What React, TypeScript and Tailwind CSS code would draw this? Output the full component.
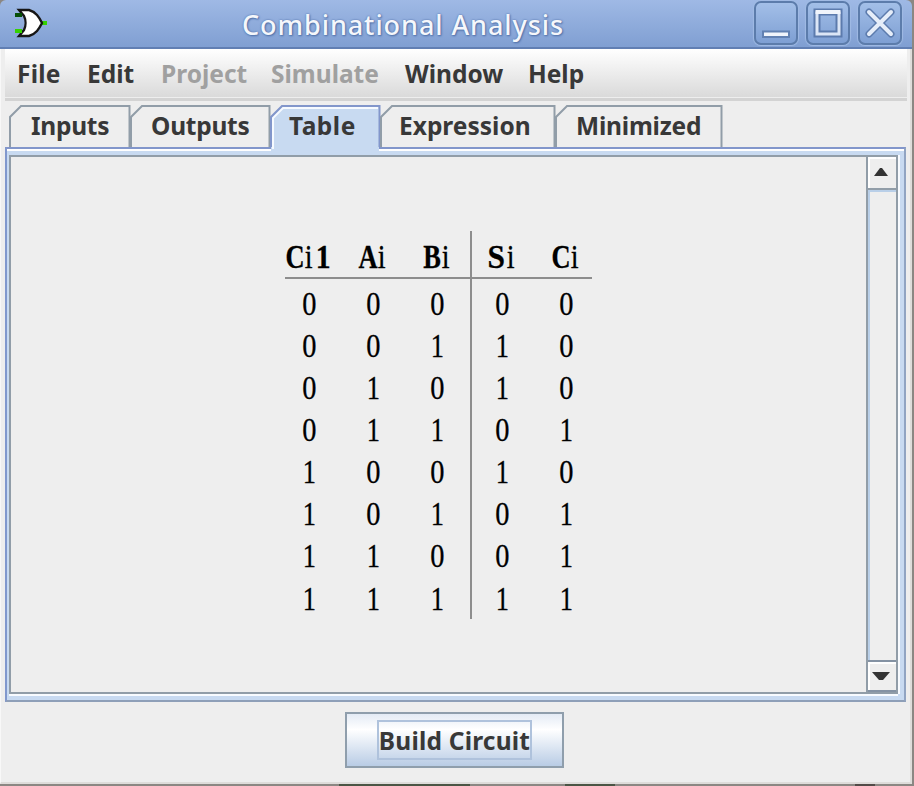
import type { ReactNode } from "react";

const inputs = [
  ["0", "0", "0"],
  ["0", "0", "1"],
  ["0", "1", "0"],
  ["0", "1", "1"],
  ["1", "0", "0"],
  ["1", "0", "1"],
  ["1", "1", "0"],
  ["1", "1", "1"],
];

const outputs = [
  ["0", "0"],
  ["1", "0"],
  ["1", "0"],
  ["0", "1"],
  ["1", "0"],
  ["0", "1"],
  ["0", "1"],
  ["1", "1"],
];

function GateIcon() {
  return (
    <svg className="block h-[30px] w-[34px]" viewBox="0 0 34 30">
      <path d="M27 15H33" stroke="#35d000" strokeWidth="4" />
      <path
        d="M5 2H15C22 4 25 9 28 15C25 21 22 26 15 28H5L10 22C12 18 12 12 10 8Z"
        fill="#fff"
        stroke="#161616"
        strokeWidth="2.4"
      />
      <path d="M1 7H8" stroke="#064f08" strokeWidth="4" />
      <path d="M1 23H8" stroke="#35d000" strokeWidth="4" />
    </svg>
  );
}

function WindowButton({ label, children }: { label: string; children: ReactNode }) {
  return (
    <button
      aria-label={label}
      className="flex h-[44px] w-[44px] items-center justify-center rounded-[7px] border-2 border-[#5c7cab] bg-gradient-to-b from-[#a3bfe8] to-[#7e9fd3] shadow-[0_0_1px_1px_#a0bbe4]"
    >
      <svg className="block h-10 w-10 shrink-0" viewBox="0 0 40 40">
        {children}
      </svg>
    </button>
  );
}

function Tab({ label, width, selected, text }: { label: string; width: number; selected?: boolean; text: string }) {
  const edge = selected ? "#8296cb" : "#919da8";
  const w = width;
  return (
    <button className="relative h-[42px] shrink-0 text-left" style={{ width: w }}>
      <svg className="absolute left-0 top-0 block h-[47px] overflow-visible" width={w} height="47">
        <path
          d={`M1 ${selected ? 47 : 42}V12L12 1H${w - 1}V${selected ? 47 : 42}Z`}
          fill={selected ? "#c8daf1" : "#eeeeee"}
        />
        {selected && <path d={`M3 44V13L13 3H${w - 2}`} fill="none" stroke="#f6faff" strokeWidth="2" />}
        <path d={`M1 42V12L12 1H${w - 0.5}V42`} fill="none" stroke={edge} strokeWidth="2" />
      </svg>
      <span className={`relative block whitespace-nowrap leading-[42px] ${text}`}>{label}</span>
    </button>
  );
}

function Digit({ value }: { value: string }) {
  return (
    <span className="flex w-16 justify-center">
      <span className={value === "0" ? "block scale-x-[0.86]" : "block scale-x-[0.8]"}>{value}</span>
    </span>
  );
}

function Heading({ first, last = "" }: { first: string; last?: string }) {
  return (
    <span className="flex w-16 items-baseline justify-center">
      <b className="flex w-[19px] justify-center">
        <span className={first === "S" ? "block scale-x-[0.95]" : "block scale-x-[0.8]"}>{first}</span>
      </b>
      <span className="flex w-[9px] justify-center">
        <span className="block scale-x-[0.85]">i</span>
      </span>
      {last && (
        <b className="ml-[2px] flex w-[15px] justify-center">
          <span className="block scale-x-[0.9]">{last}</span>
        </b>
      )}
    </span>
  );
}

function Rows({ rows }: { rows: string[][] }) {
  return (
    <div className="-ml-px pt-[4px]">
      {rows.map((row, i) => (
        <div key={i} className="flex h-[42.15px] items-center">
          {row.map((value, j) => (
            <Digit key={j} value={value} />
          ))}
        </div>
      ))}
    </div>
  );
}

export default function App() {
  return (
    <div className="flex h-[786px] w-[914px] flex-col overflow-hidden bg-[#8b8783] font-['Noto_Sans',sans-serif] text-[24.5px] font-bold text-[#383838]">
      <header className="flex h-[49px] w-[912px] shrink-0 rounded-t-[6px] border-b-2 border-[#617fb3] bg-gradient-to-b from-[#9fb9e5] to-[#809fd2]">
        <div className="w-[242px] pl-[14px] pt-[8px]">
          <GateIcon />
        </div>
        <h1 className="w-[512px] whitespace-nowrap pt-[3px] text-[27px] font-medium leading-[44px] tracking-[0.93px] text-[#f5f7fb] [text-shadow:0_0_2px_#4d6da6,1px_1px_2px_#5273ab]">
          Combinational Analysis
        </h1>
        <div className="flex gap-[8px] pt-px">
          <WindowButton label="Minimize">
            <rect x="7" y="28.5" width="26" height="5.5" fill="#f0f4fb" stroke="#6281b2" strokeWidth="2" />
          </WindowButton>
          <WindowButton label="Maximize">
            <rect x="9" y="9" width="22" height="22" fill="none" stroke="#5c7bad" strokeWidth="7" />
            <path d="M9 8.5V31H31V8.5" fill="none" stroke="#dce6f6" strokeWidth="3" />
            <path d="M7.5 9H32.5" stroke="#f0f4fb" strokeWidth="4" />
          </WindowButton>
          <WindowButton label="Close">
            <path d="M9 9L31 31M31 9L9 31" stroke="#5c7bad" strokeWidth="7" strokeLinecap="round" />
            <path d="M9 9L31 31M31 9L9 31" stroke="#e5edf9" strokeWidth="4" strokeLinecap="round" />
          </WindowButton>
        </div>
      </header>

      <main className="flex h-[735px] w-[912px] shrink-0 flex-col border-b-2 border-l border-r-2 border-b-[#dedcda] border-l-[#f8f8f8] border-r-[#dedcda] bg-[#eeeeee] pl-[4px]">
        <nav className="flex h-[48px] w-[902px] shrink-0 whitespace-nowrap bg-gradient-to-b from-white to-[#dadada] leading-[50px]">
          <span className="w-[70px] pl-[12px] tracking-[0.2px]">File</span>
          <span className="w-[74px] pl-[12px]">Edit</span>
          <span className="w-[110px] pl-[12px] text-[#a0a0a0]">Project</span>
          <span className="w-[134px] pl-[12px] text-[#a0a0a0]">Simulate</span>
          <span className="w-[124px] pl-[12px]">Window</span>
          <span className="pl-[11px]">Help</span>
        </nav>
        <div className="mt-px h-[3px] w-[902px] shrink-0 bg-[#d3d3d3]" />
        <div className="mt-[4px] flex h-[42px] shrink-0 pl-[4px]">
          <Tab label="Inputs" width={121} text="pl-[22px] tracking-[-0.25px]" />
          <Tab label="Outputs" width={140} text="pl-[21px] tracking-[-0.25px]" />
          <Tab label="Table" width={110} text="pl-[19px] tracking-[0.5px]" selected />
          <Tab label="Expression" width={175} text="pl-[19px]" />
          <Tab label="Minimized" width={167} text="pl-[21px] tracking-[-0.2px]" />
        </div>

        <section className="flex h-[555px] w-[901px] shrink-0 border-2 border-b-[#8e9fb8] border-l-[#8198cd] border-r-[#91a4c2] border-t-[#8296cb] bg-[#c8daf1] pl-[2px] pt-[2px] shadow-[inset_0_2px_0_#fff]">
          <div className="mt-[4px] flex h-[539px] w-[889px] border-2 border-[#919da8] shadow-[0_2px_0_#f8fbff,2px_0_0_#f8fbff]">
            <div className="flex w-[855px] bg-[#eeeeee] pl-[267px] pt-[74px] font-['Liberation_Serif',serif] text-[33px] font-normal leading-none text-black [-webkit-text-stroke:0.3px_#000]">
              <div className="h-[388px] w-[194px] border-r-2 border-[#8d8d8d]">
                <div className="-ml-[2px] flex h-[48px] items-center pt-[4px]">
                  <Heading first="C" last="1" />
                  <Heading first="A" />
                  <Heading first="B" />
                </div>
                <div className="-mt-[2px] ml-[7px] h-[2px] bg-[#8d8d8d]" />
                <Rows rows={inputs} />
              </div>
              <div className="-ml-[1px] h-[388px] w-[128px]">
                <div className="-ml-[2px] flex h-[48px] items-center pt-[4px]">
                  <Heading first="S" />
                  <Heading first="C" />
                </div>
                <div className="-mt-[2px] mr-[7px] h-[2px] bg-[#8d8d8d]" />
                <Rows rows={outputs} />
              </div>
            </div>
            <div className="flex w-[30px] flex-col border-l-2 border-[#919da8] bg-[#eeeeee]">
              <div className="flex h-[33px] items-center justify-center border-b-2 border-[#919da8] pb-[2px] pr-[2px] shadow-[inset_2px_2px_0_#fff]">
                <svg className="block h-[8px] w-[14px]" viewBox="0 0 14 8">
                  <path d="M0 8L6 0H8L14 8Z" fill="#333" />
                </svg>
              </div>
              <div className="h-[470px] border-l-2 border-t-2 border-[#b9cfe8]" />
              <div className="flex h-[32px] items-center justify-center border-b-2 border-t-2 border-[#8492a3] pr-[2px] shadow-[inset_2px_2px_0_#fff]">
                <svg className="block h-[8px] w-[18px]" viewBox="0 0 18 8">
                  <path d="M0 0H18L11 8H7Z" fill="#333" />
                </svg>
              </div>
            </div>
          </div>
        </section>

        <button className="ml-[340px] mt-[10px] flex h-[56px] w-[219px] shrink-0 items-center justify-center border-2 border-[#8f9eac] bg-gradient-to-b from-[#e4ebf5] via-white via-30% to-[#b9cce5]">
          <span className="flex h-[40px] w-[155px] items-center justify-center whitespace-nowrap border-2 border-[#afc2dc] pt-[2px] tracking-[0.2px]">
            Build Circuit
          </span>
        </button>
      </main>
      <footer className="flex h-[2px] shrink-0 bg-[#8b8783]">
        <div className="ml-[339px] w-[131px] bg-[#4b5545]" />
        <div className="ml-[95px] w-[50px] bg-[#4b5545]" />
        <div className="ml-[240px] w-[20px] bg-[#524b48]" />
      </footer>
    </div>
  );
}
